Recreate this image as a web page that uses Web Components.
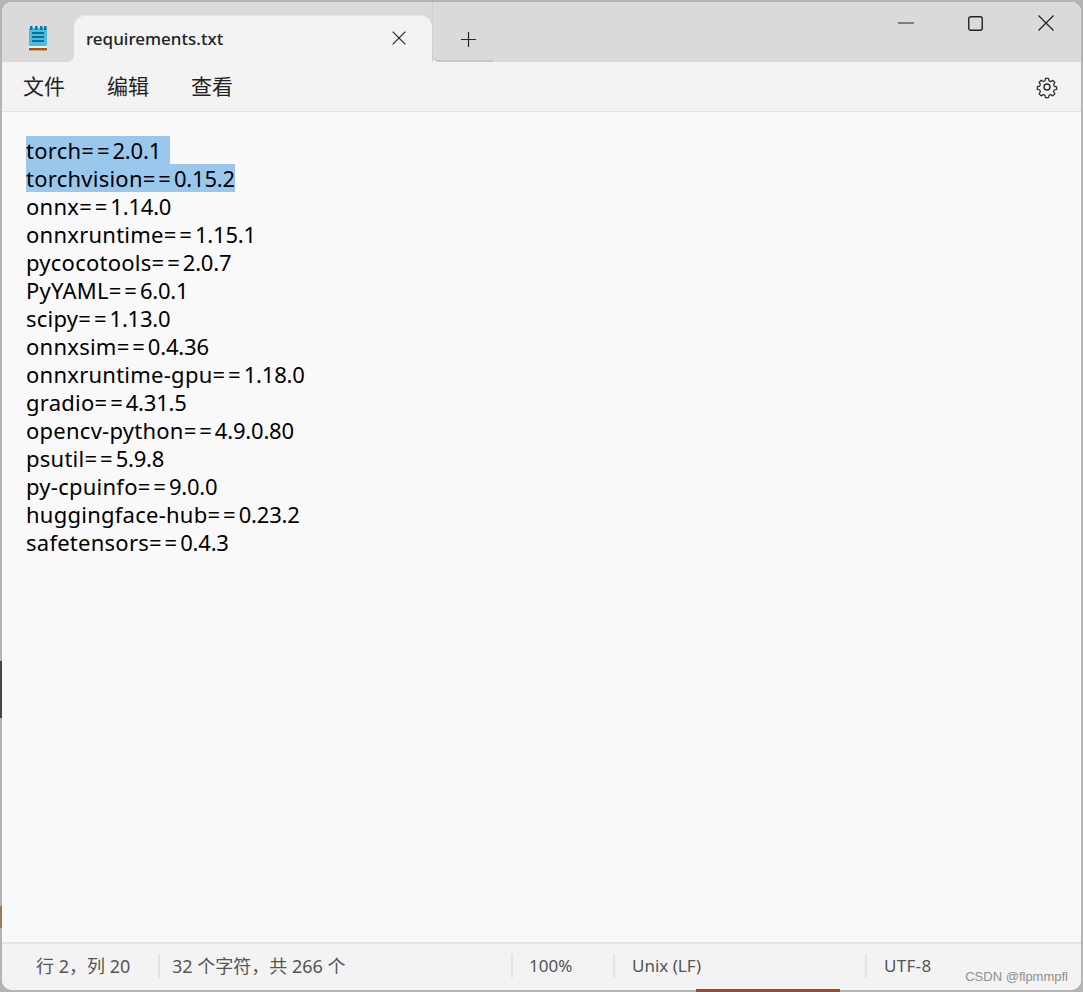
<!DOCTYPE html>
<html lang="zh"><head><meta charset="utf-8">
<style>
html,body{margin:0;padding:0;background:#b4b4b4;}
body{width:1083px;height:992px;overflow:hidden;font-family:"Noto Sans","Noto Sans CJK SC",sans-serif;}
</style></head><body>
<np-window>
  <np-titlebar slot="title" tab="requirements.txt"></np-titlebar>
  <np-menubar slot="menu"><span>文件</span><span>编辑</span><span>查看</span></np-menubar>
  <np-editor slot="editor"></np-editor>
  <np-status slot="status"></np-status>
</np-window>
<script>
const def=(name,html,init)=>customElements.define(name,class extends HTMLElement{
  constructor(){super();this.attachShadow({mode:'open'}).innerHTML=html;}
  connectedCallback(){init&&init.call(this);}
});
def('np-window',`<style>
:host{display:block;position:relative;width:1083px;height:992px;box-sizing:border-box;}
.w{box-sizing:border-box;height:992px;display:flex;flex-direction:column;background:#f9f9f9;border:2px solid #b4b4b4;border-radius:12px;overflow:hidden;position:relative;z-index:1}
.strip{position:absolute;left:0;width:2px;z-index:2}
.red{position:absolute;left:696px;bottom:0;width:144px;height:3px;background:#a8442f;z-index:2}
</style><div class="w"><slot name="title"></slot><slot name="menu"></slot><slot name="editor"></slot><slot name="status"></slot></div>
<div class="strip" style="top:661px;height:57px;background:#45454d"></div>
<div class="strip" style="top:906px;height:22px;background:#9c7a5c"></div>
<div class="red"></div>`);
def('np-titlebar',`<style>
:host{display:flex;height:60px;background:#f3f3f3;flex:none;position:relative;align-items:stretch}
.ico{width:72px;display:flex;justify-content:center;padding-top:23px;box-sizing:border-box;flex:none;background:#dadada;border-radius:0 0 7px 0;}
.wrap{flex:none;background:#dadada;padding-top:13px;display:flex}
.tab{width:358px;background:#f3f3f3;border-radius:12px 12px 0 0;box-shadow:inset 0 1px 0 #e6e6e6,1px 0 0 #cfcfcf;display:flex;align-items:center;justify-content:space-between;padding:0 26px 0 12px;box-sizing:border-box;font:500 17px "Noto Sans",sans-serif;color:#222}
.tab svg{display:block;position:relative;top:-1px}
.plus{width:61px;display:flex;justify-content:center;padding:30px 0 0 11px;box-sizing:border-box;flex:none;background:#dadada;border-bottom:2px solid #c6c6c6;border-left:1px solid #cfcfcf;border-radius:0 0 0 7px}
.sp{flex:1;background:#dadada;min-width:0}
.ctl{display:flex;flex:none;width:211px;padding-top:4px;box-sizing:border-box;background:#dadada}
.ctl div{width:70px;height:34px;display:flex;align-items:center;justify-content:center}
.ctl div:first-child{position:relative;left:1px}
.ctl div:last-child{position:relative;left:1px}
</style>
<div class="ico"><svg width="22" height="26" viewBox="0 0 22 26">
<rect x="2" y="3" width="18" height="18" rx="1" fill="#4dbbe0"/>
<rect x="3" y="1" width="2.5" height="4" fill="#0b7aa3"/><rect x="8" y="1" width="2.5" height="4" fill="#0b7aa3"/><rect x="13" y="1" width="2.5" height="4" fill="#0b7aa3"/><rect x="17" y="1" width="2.5" height="4" fill="#0b7aa3"/>
<rect x="5" y="7" width="12" height="2" fill="#0b6f96"/><rect x="5" y="11" width="12" height="2" fill="#0b6f96"/><rect x="5" y="15" width="12" height="2" fill="#0b6f96"/>
<rect x="2" y="21" width="18" height="2" fill="#f0efe9"/><rect x="2" y="23" width="18" height="2.4" fill="#b0520f"/></svg></div>
<div class="wrap"><div class="tab"><span id="t"></span><svg width="14" height="14" viewBox="0 0 14 14"><path d="M.7 .7L13.3 13.3M13.3 .7L.7 13.3" stroke="#2a2a2a" stroke-width="1.2" fill="none"/></svg></div></div>
<div class="plus"><svg width="15" height="15" viewBox="0 0 15 15"><path d="M7.5 0V15M0 7.5H15" stroke="#2a2a2a" stroke-width="1.2" fill="none"/></svg></div>
<div class="sp"></div>
<div class="ctl">
<div><svg width="16" height="2" viewBox="0 0 16 2"><path d="M0 1H16" stroke="#222" stroke-width="1.2"/></svg></div>
<div><svg width="15" height="15" viewBox="0 0 15 15"><rect x=".75" y=".75" width="13.5" height="13.5" rx="2" fill="none" stroke="#222" stroke-width="1.4"/></svg></div>
<div><svg width="16" height="16" viewBox="0 0 16 16"><path d="M.5 .5L15.5 15.5M15.5 .5L.5 15.5" stroke="#222" stroke-width="1.3" fill="none"/></svg></div>
</div>`,function(){this.shadowRoot.getElementById('t').textContent=this.getAttribute('tab');});
def('np-menubar',`<style>
:host{display:flex;flex:none;height:49px;box-sizing:content-box;background:#f3f3f3;border-bottom:1px solid #e3e3e3;align-items:center;position:relative;padding-left:21px;gap:42px;font:21px/46px "Noto Sans CJK SC",sans-serif;color:#222}
svg{position:absolute;right:22px;top:13px}
::slotted(span){display:block;height:46px;margin-bottom:3px}
</style><slot></slot>
<svg width="24" height="24" viewBox="0 0 24 24" fill="none" stroke="#2a2a2a" stroke-width="1.4" stroke-linejoin="round"><circle cx="12" cy="12" r="3"/><path d="M10.3 2.3h3.4l.6 2.7 2 .9 2.4-1.5 2.3 2.5-1.5 2.3.8 2 2.7.6v3l-2.7.6-.8 2 1.5 2.4-2.4 2.3-2.3-1.5-2 .8-.6 2.7h-3.4l-.6-2.7-2-.8-2.4 1.5-2.3-2.4 1.5-2.3-.8-2-2.7-.6v-3.2l2.7-.6.8-2-1.5-2.3 2.3-2.4 2.4 1.5 2-.9z" transform="translate(12 12) scale(.88) translate(-12 -12)"/></svg>`);
def('np-editor',`<style>
:host{display:block;flex:1;min-height:0;background:#f9f9f9;padding:24px 0 0 24px;font:22px/28px "Noto Sans","Noto Sans CJK SC",sans-serif;color:#000;white-space:pre}
.l{height:28px}
.s{background:#99c8ec;display:inline-block;height:28px}
.t{padding-right:3px}
.n{letter-spacing:.25px}.e{letter-spacing:3px}.v{letter-spacing:-.2px}
</style><div id="r"></div>`,function(){
const r=this.shadowRoot.getElementById('r');
if(r.childElementCount)return;
`torch==2.0.1 
torchvision==0.15.2
onnx==1.14.0
onnxruntime==1.15.1
pycocotools==2.0.7
PyYAML==6.0.1
scipy==1.13.0
onnxsim==0.4.36
onnxruntime-gpu==1.18.0
gradio==4.31.5
opencv-python==4.9.0.80
psutil==5.9.8
py-cpuinfo==9.0.0
huggingface-hub==0.23.2
safetensors==0.4.3`.split('\n').forEach((t,i)=>{
  const d=document.createElement('div');d.className='l';
  const [a,b]=t.split('==');
  const p=i<2?document.createElement('span'):d;
  if(i<2){p.className=i==0?'s t':'s';d.append(p);}
  [['n',a],['e','=='],['v',b]].forEach(([c,x])=>{const s=document.createElement('span');s.className=c;s.textContent=x;p.append(s);});
  r.append(d);
});
});
def('np-status',`<style>
:host{display:flex;flex:none;height:48px;background:#f3f3f3;border-top:2px solid #e4e4e4;box-sizing:border-box;padding-bottom:3px;align-items:center;font:17px "Noto Sans","Noto Sans CJK SC",sans-serif;color:#555;position:relative}
div{box-sizing:border-box;height:24px;line-height:24px;padding-left:17px;white-space:nowrap;flex:none}
div+div{border-left:2px solid #e4e4e4}
.c{font-size:18px}
.wm{position:absolute;right:13px;bottom:6px;font:13px "Liberation Sans",sans-serif;color:#8f8f8f;}
</style>
<div class="c" style="width:156px;padding-left:34px">行 2，列 20</div>
<div class="c" style="width:353px;padding-left:12px">32 个字符，共 266 个</div>
<div style="width:102px;padding-left:16px">100%</div>
<div style="width:252px">Unix (LF)</div>
<div style="width:200px;letter-spacing:.3px">UTF-8</div>
<span class="wm">CSDN @flpmmpfl</span>`);
</script></body></html>
